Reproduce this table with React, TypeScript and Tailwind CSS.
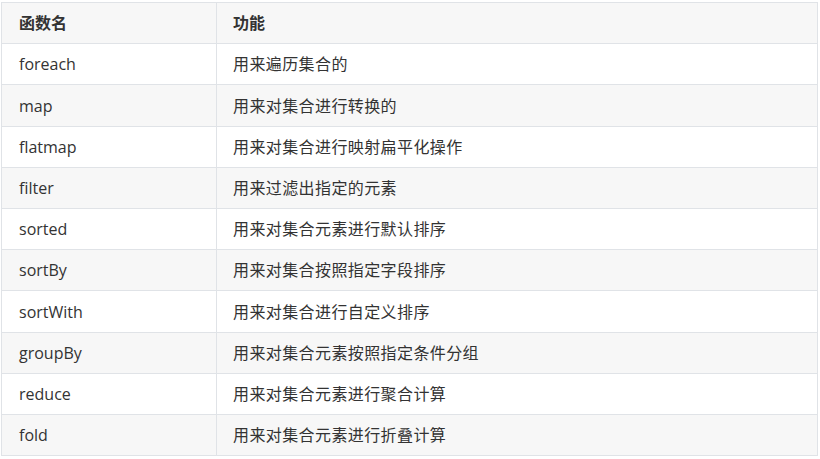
const rows: [string, string][] = [
  ["foreach", "用来遍历集合的"],
  ["map", "用来对集合进行转换的"],
  ["flatmap", "用来对集合进行映射扁平化操作"],
  ["filter", "用来过滤出指定的元素"],
  ["sorted", "用来对集合元素进行默认排序"],
  ["sortBy", "用来对集合按照指定字段排序"],
  ["sortWith", "用来对集合进行自定义排序"],
  ["groupBy", "用来对集合元素按照指定条件分组"],
  ["reduce", "用来对集合元素进行聚合计算"],
  ["fold", "用来对集合元素进行折叠计算"],
];

export default function App() {
  return (
    <div
      className="bg-white w-[820px] h-[459px] pt-[2px] pl-[1px] text-[16px] text-[#333333]"
      style={{ fontFamily: '"Open Sans", "Noto Sans CJK SC", sans-serif' }}
    >
      <table className="w-[817px] border-collapse">
        <thead>
          <tr className="bg-[#f7f7f7]">
            <th className="w-[215px] border border-[#e0e3e7] px-[17px] pt-[8.3px] pb-[6.3px] text-left font-bold leading-[1.6]">
              函数名
            </th>
            <th className="border border-[#e0e3e7] px-[16px] pt-[8.3px] pb-[6.3px] text-left font-bold leading-[1.6]">
              功能
            </th>
          </tr>
        </thead>
        <tbody>
          {rows.map(([name, desc], i) => (
            <tr key={name} className={i % 2 === 1 ? "bg-[#f7f7f7]" : "bg-white"}>
              <td className="border border-[#e0e3e7] px-[17px] pt-[8.3px] pb-[6.3px] leading-[1.6]">
                {name}
              </td>
              <td className="border border-[#e0e3e7] px-[16px] pt-[8.3px] pb-[6.3px] leading-[1.6] tracking-[0.4px]">
                {desc}
              </td>
            </tr>
          ))}
        </tbody>
      </table>
    </div>
  );
}
